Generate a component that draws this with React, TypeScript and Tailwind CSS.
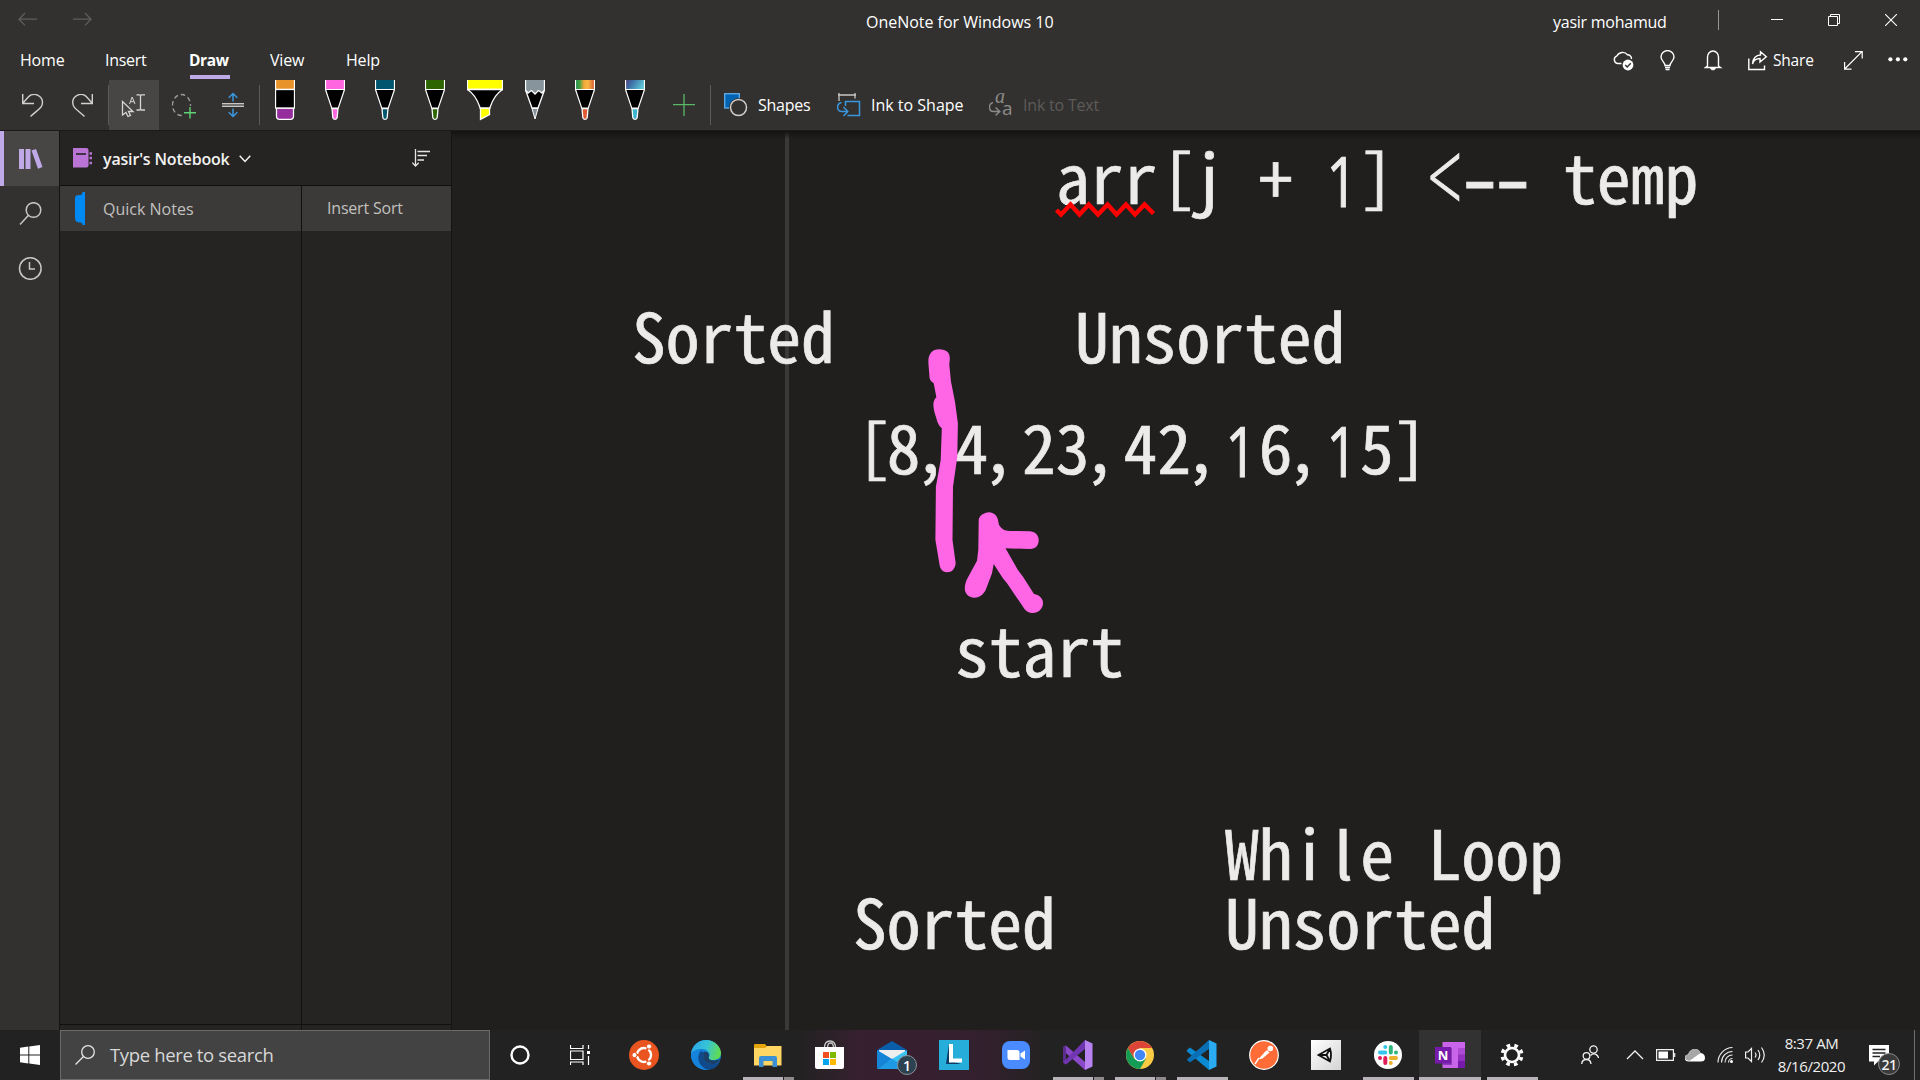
import React from "react";

type IconProps = { w: number; h: number; children: React.ReactNode; className?: string };

function Icon({ w, h, children, className = "" }: IconProps) {
  return (
    <svg
      width={w}
      height={h}
      viewBox={`0 0 ${w} ${h}`}
      fill="none"
      stroke="currentColor"
      strokeWidth={1.3}
      className={`block shrink-0 ${className}`}
    >
      {children}
    </svg>
  );
}

function TitleBar() {
  return (
    <div className="flex h-[40px] items-start">
      <Icon w={20} h={14} className="ml-[18px] mt-[12px] text-[#5f5e5c]">
        <path d="M19 7.2H1M7 1L1 7.2L7 13.4" />
      </Icon>
      <Icon w={20} h={14} className="ml-[35px] mt-[12px] text-[#5f5e5c]">
        <path d="M0 7.2H18M12 1L18 7.2L12 13.4" />
      </Icon>
      <div className="ml-[773px] mt-[11px] w-[190px] whitespace-nowrap text-[16px] leading-[22px] tracking-[-0.02px]">
        OneNote for Windows 10
      </div>
      <div className="ml-[497px] mt-[11px] w-[115px] whitespace-nowrap text-[16px] leading-[22px] tracking-[-0.25px]">
        yasir mohamud
      </div>
      <div className="ml-[50px] mt-[10px] h-[20px] w-px bg-[#979694]" />
      <Icon w={12} h={12} className="ml-[52px] mt-[14px]">
        <path d="M0 5.5H12" strokeWidth={1} />
      </Icon>
      <Icon w={12} h={12} className="ml-[45px] mt-[14px]">
        <path d="M.5 2.5H9.500V11.500H.5ZM2.500 2.500V.5H11.500V9.500H9.500" strokeWidth={1} />
      </Icon>
      <Icon w={12} h={12} className="ml-[45px] mt-[14px]">
        <path d="M0 0L12 12M12 0L0 12" strokeWidth={1.1} />
      </Icon>
    </div>
  );
}

function TabRow() {
  return (
    <div className="flex h-[40px] items-start text-[16px] leading-[22px]">
      <div className="ml-[20px] mt-[9px] w-[85px] tracking-[-0.2px]">Home</div>
      <div className="mt-[9px] w-[84px] tracking-[-0.3px]">Insert</div>
      <div className="mt-[9px] flex w-[81px] flex-col">
        <span className="text-[15.5px] font-bold tracking-[-0.4px]">Draw</span>
        <span className="ml-[1px] mt-[4px] h-[4px] w-[40px] bg-[#bfa9e6]" />
      </div>
      <div className="mt-[9px] w-[76px] tracking-[-0.2px]">View</div>
      <div className="mt-[9px] w-[60px] tracking-[-0.2px]">Help</div>
      <Icon w={22} h={20} className="ml-[1206px] mt-[11px]">
        <path d="M9.500 12.500H5.500A4 4 0 0 1 5 4.800A6 5.500 0 0 1 15.500 3.800A4 4 0 0 1 19.500 8" strokeWidth={1.4} />
        <circle cx="16" cy="14" r="5.400" fill="#fff" stroke="none" />
        <path d="M13.200 14L15.200 16L18.800 12.200" stroke="#323130" strokeWidth={1.400} />
      </Icon>
      <Icon w={16} h={21} className="ml-[26px] mt-[10px]">
        <path d="M5 15.500C5 12 1 11 1 6.800A6.500 6.200 0 0 1 14 6.800C14 11 10 12 10 15.500ZM5 17.500H10M5.500 19.500H9.500" strokeWidth={1.400} />
      </Icon>
      <Icon w={20} h={21} className="ml-[28px] mt-[10px]">
        <path d="M3.500 16V7A5.500 6 0 0 1 14.500 7V16L16.500 17.500H1.500Z" strokeWidth={1.400} />
        <path d="M6.500 18A2.500 2 0 0 0 11.500 18Z" fill="#fff" strokeWidth={0.600} />
      </Icon>
      <Icon w={20} h={21} className="ml-[24px] mt-[10px]">
        <path d="M.8 8.500V19.500H16.500V15.500M4.500 14C5.500 10 8.500 8.500 12 8.500V12L18.300 6.800L12.500 1.800V5C8 5 4.500 8.500 4.500 14Z" strokeWidth={1.400} />
      </Icon>
      <div className="ml-[5px] mt-[9px] w-[43px] text-[15.5px] tracking-[-0.2px]">Share</div>
      <Icon w={19} h={19} className="ml-[28px] mt-[11px]">
        <path d="M.7 18L18 .7M11 .6H18.200V7.500M.6 11V18.200H7.500" strokeWidth={1.200} />
      </Icon>
      <Icon w={20} h={6} className="ml-[25px] mt-[16px]">
        <g fill="#fff" stroke="none">
          <circle cx="2.400" cy="3.300" r="2.100" />
          <circle cx="9.900" cy="3.300" r="2.100" />
          <circle cx="17.300" cy="3.300" r="2.100" />
        </g>
      </Icon>
    </div>
  );
}

function Pen({ cap, tip = cap }: { cap: string; tip?: string }) {
  return (
    <div className="flex h-[50px] w-[50px] justify-center">
      <Icon w={20} h={41}>
        <rect x="0" y="-1" width="20" height="10" fill={cap} stroke="none" />
        <path d="M.5 0V10M19.500 10V0" stroke="#fff" strokeWidth={1.200} />
        <path d="M7 28.500H13L12.200 37.500Q12 39.300 10 39.300Q8 39.300 7.800 37.500Z" fill={tip} stroke="#fff" strokeWidth={1.300} />
        <path d="M.5 9.500H19.500L13.300 28H6.700Z" fill="#000" stroke="#fff" strokeWidth={1.200} />
      </Icon>
    </div>
  );
}

function Divider() {
  return <div className="mt-[5px] h-[40px] w-px bg-[#5b5a58]" />;
}

function Toolbar() {
  return (
    <div className="flex h-[50px] items-start">
      <Icon w={22} h={24} className="ml-[22px] mt-[14px] text-[#d2d0ce]">
        <path d="M.7 0V9.500H12M1 9L6.500 2.800C12 -2.500 20.500 2 20.500 8.500C20.500 14 16 15.500 8.500 22.500" strokeWidth={1.400} />
      </Icon>
      <Icon w={22} h={24} className="ml-[28px] mt-[14px] text-[#d2d0ce]">
        <path d="M20.300 0V9.500H9M20 9L14.500 2.800C9 -2.500 .7 2 .7 8.500C.7 14 5 15.500 12.500 22.500" strokeWidth={1.400} />
      </Icon>
      <div className="ml-[14px]">
        <Divider />
      </div>
      <div className="h-[50px] w-[50px] bg-[#484644] pl-[12px] pt-[14px] text-[#d8d6d4]">
        <Icon w={26} h={24}>
          <path d="M1.500 7.500V21L5 18.500L7 22.500L9.500 21.500L7.500 17.500H12Z" strokeWidth={1.300} />
          <path d="M16 .8H19Q20 .8 20 2V15Q20 16 19 16H16M24.500 .8H21Q20 .8 20 2V15Q20 16 21 16H24.500" strokeWidth={1.300} transform="translate(-.5 0)" />
          <path d="M8.500 10L11.200 3L14 10M9.500 7.700H13" strokeWidth={1} />
        </Icon>
      </div>
      <Icon w={26} h={26} className="ml-[12px] mt-[13px]">
        <ellipse cx="10.500" cy="12" rx="9" ry="10.500" stroke="#a19f9d" strokeDasharray="4.500 3" strokeWidth={1.300} />
        <rect x="12" y="13" width="14" height="13" fill="#323130" stroke="none" />
        <path d="M19 14V25.500M13 19.700H25" stroke="#5fd175" strokeWidth={1.400} />
      </Icon>
      <Icon w={22} h={26} className="ml-[25px] mt-[12px]">
        <path d="M0 11.500H22M0 14.500H22" stroke="#c8c6c4" strokeWidth={1.200} />
        <path d="M0 13H22" stroke="#8a8886" strokeWidth={1.500} />
        <path d="M11 9.500V1.500M6.700 5.700L11 1.500L15.300 5.700M11 16.500V24.500M6.700 20.300L11 24.500L15.300 20.300" stroke="#3a96dd" strokeWidth={1.500} />
      </Icon>
      <div className="ml-[15px]">
        <Divider />
      </div>
      <div className="flex h-[50px] w-[50px] justify-center">
        <Icon w={20} h={41}>
          <rect x=".5" y="-1" width="19" height="10.500" fill="#e8922a" stroke="#fff" />
          <path d="M1.500 28H18.500V36Q18.500 39.300 15.500 39.300H4.500Q1.500 39.300 1.500 36Z" fill="#962d9c" stroke="#fff" />
          <rect x=".5" y="9.500" width="19" height="18.500" fill="#000" stroke="#fff" />
        </Icon>
      </div>
      <Pen cap="#ff66e0" />
      <Pen cap="#00556f" />
      <Pen cap="#2d6600" />
      <div className="flex h-[50px] w-[50px] justify-center">
        <Icon w={36} h={41}>
          <path d="M.5 -1H35.500V9.500H.5Z" fill="#ffff00" stroke="#fff" />
          <path d="M13.500 28H22.500V34.500L13.500 39.300Z" fill="#ffff00" stroke="#fff" />
          <path d="M.5 9.500H35.500Q27 15 23 27.500V28H13V27.500Q9 15 .5 9.500Z" fill="#000" stroke="#fff" />
        </Icon>
      </div>
      <div className="flex h-[50px] w-[50px] justify-center">
        <Icon w={20} h={41}>
          <path d="M.5 0V10L7 28H13L19.500 10V0Z" fill="#000" stroke="#fff" />
          <path d="M.5 -1H19.500V10L17 13L13.500 10.500L10 14L6.500 10.500L3 13L.5 10Z" fill="#87949c" stroke="#fff" />
          <path d="M7 28.500H13L10 39Z" fill="#87949c" stroke="#fff" strokeWidth={1} />
        </Icon>
      </div>
      <svg width="0" height="0" className="absolute">
        <defs>
          <linearGradient id="rainbow" x1="0" x2="1">
            <stop offset="0" stopColor="#138a57" />
            <stop offset=".25" stopColor="#4fa23f" />
            <stop offset=".45" stopColor="#f2a93a" />
            <stop offset=".65" stopColor="#f7b846" />
            <stop offset="1" stopColor="#d4502f" />
          </linearGradient>
          <linearGradient id="galaxy" x1="0" x2="1" y2=".3">
            <stop offset="0" stopColor="#5b3a78" />
            <stop offset=".4" stopColor="#3e6ea5" />
            <stop offset="1" stopColor="#5cc3d4" />
          </linearGradient>
        </defs>
      </svg>
      <Pen cap="url(#rainbow)" tip="#df5a33" />
      <Pen cap="url(#galaxy)" tip="#3fb4cf" />
      <Icon w={22} h={22} className="ml-[13px] mt-[14px] text-[#59b868]">
        <path d="M11 0V22M0 10.700H22" strokeWidth={1.300} />
      </Icon>
      <div className="ml-[15px]">
        <Divider />
      </div>
      <Icon w={24} h={24} className="ml-[13px] mt-[13px]">
        <rect x=".7" y=".7" width="14.600" height="14.300" fill="#0063b1" stroke="#5aa7e4" strokeWidth={1.400} />
        <circle cx="14.500" cy="14.500" r="9.500" fill="#323130" stroke="none" />
        <circle cx="14.500" cy="14.500" r="8" stroke="#d2d0ce" strokeWidth={1.500} />
      </Icon>
      <div className="ml-[10px] mt-[14px] w-[54px] text-[16px] leading-[22px] tracking-[-0.25px]">Shapes</div>
      <Icon w={24} h={24} className="ml-[25px] mt-[13px]">
        <path d="M1 2H19M2 0V8M18 0V5.500" stroke="#c8c6c4" strokeWidth={1.300} />
        <path d="M8.500 13V8.500H22.500V22.500H10.500" stroke="#3a96dd" strokeWidth={1.500} />
        <path d="M4.500 9.500C-1 11 -.5 18.500 5 18.500H10.500M6.500 14L10.800 18.500L6.500 23" stroke="#3a96dd" strokeWidth={1.500} />
      </Icon>
      <div className="ml-[10px] mt-[14px] w-[94px] whitespace-nowrap text-[16px] leading-[22px]">Ink to Shape</div>
      <div className="relative ml-[24px] mt-[13px] h-[24px] w-[24px] text-[#8d8b89]">
        <Icon w={24} h={24}>
          <path d="M4 9.500C-1 11 -.5 18.500 4.500 18.500H10.500M6.500 14.500L10.800 18.500L6.500 22.500" strokeWidth={1.400} />
        </Icon>
        <span className="absolute left-[6px] top-[-9px] font-[Liberation_Serif] text-[20px] italic leading-[24px]">a</span>
        <span className="absolute left-[13px] top-[2px] text-[19px] leading-[26px]">a</span>
      </div>
      <div className="ml-[10px] mt-[14px] whitespace-nowrap text-[16px] leading-[22px] tracking-[-0.2px] text-[#5d5b59]">Ink to Text</div>
    </div>
  );
}

function Rail() {
  return (
    <div className="flex w-[59px] shrink-0 flex-col bg-[#323130] text-[#c8c6c4]">
      <div className="flex h-[55px] border-l-4 border-[#bfa9e6] bg-[#484644]">
        <Icon w={26} h={22} className="ml-[14px] mt-[17px]">
          <g fill="#bfa9e6" stroke="none">
            <rect x="1" y="1" width="5" height="20" />
            <rect x="7.500" y="1" width="5" height="20" />
            <path d="M13.500 2.500L18 1L24.500 19L20 20.700Z" />
          </g>
        </Icon>
      </div>
      <Icon w={24} h={24} className="ml-[19px] mt-[16px]">
        <circle cx="14.500" cy="8" r="7.300" strokeWidth={1.500} />
        <path d="M9.300 13.500L1 22.500" strokeWidth={1.500} />
      </Icon>
      <Icon w={24} h={24} className="ml-[18px] mt-[30px]">
        <circle cx="12.300" cy="12.500" r="10.800" strokeWidth={1.500} />
        <path d="M11.500 6V13H17" strokeWidth={1.500} />
      </Icon>
    </div>
  );
}

function SidePanel() {
  return (
    <div className="flex w-[393px] shrink-0 flex-col border-l border-r border-[#151413] bg-[#252423]">
      <div className="flex h-[55px] items-start border-b border-[#11100f]">
        <Icon w={20} h={20} className="ml-[13px] mt-[17px]">
          <path d="M0 0H13.500Q15.500 0 15.500 2V17.500Q15.500 19.500 13.500 19.500H0Z" fill="#b974d6" stroke="none" />
          <path d="M3 6H13" stroke="#252423" strokeWidth={1.600} />
          <path d="M16.500 5.500H19M16.500 10H19M16.500 15H19" stroke="#b974d6" strokeWidth={2.500} />
        </Icon>
        <div className="ml-[10px] mt-[17px] w-[128px] whitespace-nowrap text-[16px] font-semibold leading-[22px] tracking-[-0.17px] text-[#f3f2f1]">
          yasir's Notebook
        </div>
        <Icon w={12} h={8} className="ml-[8px] mt-[24px] text-[#f3f2f1]">
          <path d="M.7 .8L6 6.500L11.300 .8" strokeWidth={1.500} />
        </Icon>
        <Icon w={18} h={18} className="ml-[161px] mt-[18px] text-[#e6e4e2]">
          <path d="M3.500 0V17M.3 13.700L3.500 17L6.700 13.700M5.500 2.500H18M5.500 6.500H15M5.500 11H12" strokeWidth={1.300} />
        </Icon>
      </div>
      <div className="flex grow flex-row">
        <div className="flex w-[242px] flex-col border-r border-[#11100f]">
          <div className="flex h-[45px] items-start bg-[#3b3a39]">
            <Icon w={10} h={34} className="ml-[15px] mt-[6px]">
              <path d="M10 0V33H7.500Q7.500 30.500 5 30.500H4Q0 30 0 26V6Q0 3 4 3H5Q7.500 3 7.500 0Z" fill="#0089f2" stroke="none" />
            </Icon>
            <div className="ml-[18px] mt-[12px] text-[16px] leading-[22px] text-[#c2c0be]">Quick Notes</div>
          </div>
          <div className="mb-[5px] grow border-b border-[#11100f]" />
        </div>
        <div className="flex grow flex-col">
          <div className="h-[45px] bg-[#3b3a39] pl-[25px] pt-[11px] text-[16px] leading-[22px] tracking-[-0.2px] text-[#c2c0be]">Insert Sort</div>
          <div className="mb-[5px] grow border-b border-[#11100f]" />
        </div>
      </div>
    </div>
  );
}

const notes = [
  { text: "arr[j + 1] <-- temp", x: 1056, baseline: 204 },
  { text: "Sorted", x: 632, baseline: 363 },
  { text: "Unsorted", x: 1075, baseline: 363 },
  { text: "[8,4,23,42,16,15]", x: 853, baseline: 474 },
  { text: "start", x: 955, baseline: 677 },
  { text: "While Loop", x: 1225, baseline: 880 },
  { text: "Sorted", x: 853, baseline: 948.5 },
  { text: "Unsorted", x: 1225, baseline: 948.5 },
];

const canvasX = 452;
const canvasY = 131;

// Glyphs drawn without slabs, or nudged inside their half-width cell.
const cellGlyphs: Record<string, string> = {
  i: "font-['Noto_Sans_CJK_JP']",
  l: "font-['Noto_Sans_CJK_JP'] origin-[50%_96%] scale-y-95",
  "1": "font-['Open_Sans'] scale-x-80 -translate-x-[1px] translate-y-[5px] scale-y-104 [-webkit-text-stroke:1px_#ecebe9]",
  "[": "translate-x-[4px] -translate-y-[2px] scale-y-92",
  "]": "-translate-y-[2px] scale-y-92",
  ",": "-translate-x-[7px] -translate-y-[1px]",
  "-": "scale-x-135 scale-y-120 -translate-y-[2px] translate-x-[1px]",
  "<": "font-['Open_Sans'] font-light scale-x-90 scale-y-150",
};

function NoteText({ text }: { text: string }) {
  return (
    <>
      {text.split(/([il1[\],<-])/).map((part, i) =>
        cellGlyphs[part] ? (
          <span key={i} className={`inline-flex h-[64px] w-[33.8px] justify-center align-top ${cellGlyphs[part]}`}>
            {part}
          </span>
        ) : (
          part
        )
      )}
    </>
  );
}

function Canvas() {
  return (
    <div className="relative grow bg-[#201f1d]">
      <div className="absolute bottom-0 left-[333px] top-0 w-[4px] bg-[#3a3938]" />
      {notes.map((n, i) => (
        <div
          key={i}
          className="absolute h-[64px] whitespace-pre font-['Noto_Sans_Mono_CJK_JP','Liberation_Mono',monospace] text-[67.6px] leading-[64px] text-[#ecebe9] [-webkit-text-stroke:0.7px_#ecebe9]"
          style={{ left: n.x - canvasX, top: Math.round(n.baseline - canvasY - 61) }}
        >
          <NoteText text={n.text} />
        </div>
      ))}
      <svg className="absolute left-0 top-0" width="1468" height="899" viewBox="452 131 1468 899">
        <path
          d="M1056.500 210L1061 214.500L1070.500 204.500L1079.500 214.500L1088.700 204.500L1098 214.500L1107.600 204.500L1116.500 214.500L1126 204.500L1135 214.500L1144.500 204.500L1153.500 213.500"
          fill="none"
          stroke="#ff0000"
          strokeWidth={4.400}
        />
        <g fill="#ff66e5">
          <path d="M928.400 363C928 354 932 349.300 939 349.300C947 349.300 950 353 949.800 359L949.300 365L951 381.700L955 401.700L957.900 423.300L957.300 456.700L953 486.700L952.500 540L955.700 563.300C955 569 952 572.300 947 572.300C942 572 940 568 939.600 565L935.400 540L935.900 486.700L940.700 460L941.800 428.300C938 425 937 421 936.400 418.300C934 411 931 402 936.400 397.300L933.700 383.300C930 381 929.500 378 929.500 377.300Z" />
          <path d="M978.700 520C979 516 984 512.300 989 512.300C994 512.300 997 516 998 520L999 525C1001 528 1004 531 1009.800 531L1030.200 531.300C1036 532 1038.700 536 1038.700 540C1038.700 545 1036 549 1030 549L1005.500 548.300L1017.900 570L1023 576.700L1034 594C1040 595 1043 599 1043 603C1043 609 1038 613 1032.900 613C1028 613 1025 610 1023 606.700L1007 583.300L1002.900 578.300L993.700 564L992 573.300L985.700 590C983 595 979 597.700 974.500 597.700C968 597.700 964.800 593 964.800 588.300C965 584 966 581 967.500 578.300L977 560.700L978.300 550Z" />
        </g>
      </svg>
      <div className="absolute left-0 right-0 top-0 h-[8px] bg-gradient-to-b from-[#141312] to-transparent" />
    </div>
  );
}

function AppCell({ children, bars = "none", active = false, glow = "" }: { children: React.ReactNode; bars?: "none" | "one" | "two"; active?: boolean; glow?: string }) {
  return (
    <div className={`flex h-[50px] w-[62px] flex-col items-center ${active ? "bg-[#323232]" : glow}`}>
      <div className="flex h-[47px] items-center justify-center pt-[3px]">{children}</div>
      {bars === "one" && <div className={active ? "h-[3px] w-[62px] bg-[#b8b3b8]" : "h-[3px] w-[51px] bg-[#b8b3b8]"} />}
      {bars === "two" && (
        <div className="flex h-[3px] w-[51px] gap-px">
          <div className="w-[40px] bg-[#b8b3b8]" />
          <div className="w-[10px] bg-[#8d898d]" />
        </div>
      )}
    </div>
  );
}

function Taskbar() {
  return (
    <div className="flex h-[50px] bg-[#222222]">
      <div className="flex w-[60px] items-center justify-center">
        <Icon w={20} h={20}>
          <path d="M0 2.700L8.300 1.500V9.500H0ZM9.300 1.400L20 0V9.500H9.300ZM0 10.500H8.300V18.500L0 17.300ZM9.300 10.500H20V20L9.300 18.600Z" fill="#fff" stroke="none" />
        </Icon>
      </div>
      <div className="flex w-[430px] items-center border border-[#6a6a6a] bg-[#434343] pl-[14px]">
        <Icon w={20} h={20} className="text-[#e6e6e6]">
          <circle cx="13" cy="7" r="6.300" />
          <path d="M8.500 11.500L.5 19.500" />
        </Icon>
        <div className="ml-[15px] whitespace-nowrap text-[18.500px] leading-[26px] tracking-[-0.36px] text-[#d8d8d8]">Type here to search</div>
      </div>
      <div className="flex w-[60px] items-center justify-center">
        <Icon w={22} h={22}>
          <circle cx="11" cy="11" r="8.500" stroke="#fff" strokeWidth={2.400} />
        </Icon>
      </div>
      <div className="flex w-[63px] items-center pl-[20px]">
        <Icon w={20} h={20}>
          <path d="M.5 0V3.500H13V0M.5 6H13V14.500H.5ZM.5 20V17H13V20M18.500 0V4M18.500 11V20" strokeWidth={1.200} />
          <rect x="17" y="6" width="3" height="3" fill="#fff" stroke="none" />
        </Icon>
      </div>

      <AppCell>
        <Icon w={30} h={30}>
          <circle cx="15" cy="15" r="15" fill="#e95420" stroke="none" />
          <circle cx="15" cy="15" r="7" stroke="#fff" strokeWidth={2.500} />
          <path d="M15 15L4 15M15 15L21 4.500M15 15L21 25.500" stroke="#e95420" strokeWidth={2} />
          <circle cx="15" cy="15" r="5.500" fill="#e95420" stroke="none" />
          <g fill="#fff" stroke="#e95420" strokeWidth={1}>
            <circle cx="5.500" cy="15" r="2.600" />
            <circle cx="20" cy="6.500" r="2.600" />
            <circle cx="20" cy="23.500" r="2.600" />
          </g>
        </Icon>
      </AppCell>
      <AppCell>
        <Icon w={30} h={30}>
          <defs>
            <linearGradient id="edgeTop" x1="0" x2="1" y1=".3" y2=".5">
              <stop offset="0" stopColor="#2ba5e8" />
              <stop offset=".5" stopColor="#36c3d8" />
              <stop offset="1" stopColor="#63dd4b" />
            </linearGradient>
          </defs>
          <g stroke="none">
            <circle cx="15" cy="15" r="15" fill="#1280d8" />
            <path d="M0 14C1 5 8 0 15 0C24 0 30 7 30 13C30 18 26 20 22 20C19 20 17 19 18 17C20 14 17 9 11 9C6 9 2 11 0 14Z" fill="url(#edgeTop)" />
            <path d="M10 11C4 17 9 29 18 29.700C24 29 27 26 28.500 22C20 27 10 22 13 12.500Z" fill="#114a8b" />
            <path d="M13 12C10 19 16 25 23 24C25 23.700 27.500 22.500 28.500 21C30 20 29 19 28 19.500C24 21 17.500 21 17.500 17.500C19 15 17 11 13 12Z" fill="#1b3f66" />
            <path d="M9 10C3 18 8 28 17 30C6 30 0 23 0 14C2 11 6 9 9 10Z" fill="#1583dc" />
          </g>
        </Icon>
      </AppCell>
      <AppCell bars="two">
        <Icon w={28} h={24}>
          <g stroke="none">
            <path d="M0 2Q0 1 1 1H11L13 3.500V8H0Z" fill="#e5a50a" />
            <path d="M0 5H11L13 3H27.500V22.500H0Z" fill="#ffd563" />
            <path d="M5 24V15Q5 13 7 13H21Q23 13 23 15V24H18.500V18H9.500V24Z" fill="#3b8fd4" />
          </g>
        </Icon>
      </AppCell>
      <AppCell glow="bg-gradient-to-r from-[#222222] to-[#36202f]">
        <Icon w={30} h={30}>
          <path d="M9.500 8Q9.500 1 15 1Q20.500 1 20.500 8M12.500 8Q12.500 3 15.500 3Q18.500 3 18.500 8" stroke="#c8c8c8" />
          <g stroke="none">
            <path d="M0 7H29V27Q29 29 27 29H2Q0 29 0 27Z" fill="#fff" />
            <rect x="8" y="12" width="6" height="6" fill="#f25022" />
            <rect x="15" y="12" width="6" height="6" fill="#7fba00" />
            <rect x="8" y="19" width="6" height="6" fill="#00a4ef" />
            <rect x="15" y="19" width="6" height="6" fill="#ffb900" />
          </g>
        </Icon>
      </AppCell>
      <AppCell glow="bg-[#36202f]">
        <div className="relative h-[30px] w-[30px]">
          <Icon w={30} h={30}>
            <g stroke="none">
              <path d="M0 10L15 1L30 10V13H0Z" fill="#0a5da8" />
              <path d="M2 10H28V16L15 24L2 16Z" fill="#eeeeee" />
              <path d="M0 10L15 19L0 29Z" fill="#1583d6" />
              <path d="M30 10L15 19L30 29Z" fill="#39c2f4" />
              <path d="M0 29L15 18.500L30 29Z" fill="#1e9ae4" />
            </g>
          </Icon>
          <div className="absolute left-[20px] top-[15px] flex h-[20px] w-[20px] items-center justify-center rounded-full border border-[#8b9298] bg-[#2d4250] text-[14px] font-semibold">1</div>
        </div>
      </AppCell>
      <AppCell glow="bg-gradient-to-r from-[#36202f] to-[#33202d]">
        <div className="h-[30px] w-[30px] bg-[#27add9]">
          <Icon w={30} h={30}>
            <path d="M10 4L7 24H22L12 21Z" fill="#0d3b66" stroke="none" />
            <path d="M12 4V20.500H23" stroke="#fff" strokeWidth={4} />
          </Icon>
        </div>
      </AppCell>
      <AppCell glow="bg-gradient-to-r from-[#33202d] to-[#222222]">
        <Icon w={28} h={28}>
          <rect width="28" height="28" rx="8" fill="#4a8cff" stroke="none" />
          <path d="M5.500 9H15Q17.500 9 17.500 11.500V19H8Q5.500 19 5.500 16.500ZM18.500 12.500L23 9.500V18.500L18.500 15.500Z" fill="#fff" stroke="none" />
        </Icon>
      </AppCell>
      <AppCell bars="two">
        <Icon w={30} h={30}>
          <g stroke="none">
            <path d="M0 7L3 5.500L22 22V30L0 10.500Z" fill="#8a49c9" />
            <path d="M0 7L3 5.500V24.500L0 22.500Z" fill="#5c2d91" />
            <path d="M0 22.500L22 0V9L3 24.500Z" fill="#7035b0" />
            <path d="M22 0L29.500 3.500V26.500L22 30Z" fill="#b883f0" />
          </g>
        </Icon>
      </AppCell>
      <AppCell bars="two">
        <Icon w={28} h={28}>
          <g stroke="none">
            <circle cx="14" cy="14" r="14" fill="#fbcb43" />
            <path d="M1.900 7A14 14 0 0 1 26.100 7H14L8 17.500Z" fill="#db4437" />
            <path d="M1.900 7A14 14 0 0 0 14 28L20 17.500H14L8 17.500Z" fill="#149b56" />
            <circle cx="14" cy="14" r="6.500" fill="#fff" />
            <circle cx="14" cy="14" r="5.200" fill="#4285f4" />
          </g>
        </Icon>
      </AppCell>
      <AppCell bars="one">
        <Icon w={30} h={30}>
          <g stroke="none">
            <path d="M0 10L3 7.500L22 21V30L0 11.500Z" fill="#0a8ad2" />
            <path d="M0 19.500L22 0V9L3 22.500L0 20Z" fill="#0a6fb5" />
            <path d="M22 0L29.500 3.500V26.500L22 30Z" fill="#2aaaf0" />
          </g>
        </Icon>
      </AppCell>
      <AppCell>
        <Icon w={30} h={30}>
          <circle cx="15" cy="15" r="14.300" fill="#ff6c37" stroke="#fff" strokeWidth={1.200} />
          <path d="M6 24L10 18M10.500 19L17.500 11.500" stroke="#fff" strokeWidth={1.400} />
          <path d="M10 19L18 10L20.500 12.500L13.500 18.500Z" fill="#fff" stroke="none" />
          <circle cx="21.300" cy="8.500" r="2.800" fill="#fff" stroke="none" />
        </Icon>
      </AppCell>
      <AppCell>
        <div className="h-[30px] w-[30px] bg-gradient-to-br from-white to-[#d4d4d4]">
          <Icon w={30} h={30}>
            <path d="M7.500 15L19 8.500Q21 15 19 21.500ZM7.500 15H15.500M15.500 15L19 8.500M15.500 15L19 21.500" stroke="#111" strokeWidth={1.800} />
          </Icon>
        </div>
      </AppCell>
      <AppCell bars="one">
        <Icon w={28} h={28}>
          <circle cx="14" cy="14" r="14" fill="#fff" stroke="none" />
          <g strokeWidth={4} strokeLinecap="round">
            <path d="M11.300 6V6.100M6 11.500H11.300" stroke="#36c5f0" />
            <path d="M16.800 6V11.500M22 11.500V11.600" stroke="#2eb67d" />
            <path d="M16.800 22V22.100M16.800 17H22" stroke="#ecb22e" />
            <path d="M11.300 17V22M6 17V17.100" stroke="#e01e5a" />
          </g>
        </Icon>
      </AppCell>
      <AppCell bars="one" active>
        <div className="relative h-[28px] w-[30px]">
          <Icon w={30} h={28}>
            <g stroke="none">
              <rect x="7.500" y="1" width="22.500" height="26" fill="#ca64ea" />
              <rect x="23" y="7" width="7" height="7" fill="#ae4bd5" />
              <rect x="23" y="13.500" width="7" height="7" fill="#9332bf" />
              <rect x="23" y="20" width="7" height="7" fill="#7719aa" />
              <rect x="8" y="7" width="9" height="17" fill="#8f3fb3" />
              <rect x="0" y="6" width="16" height="16.500" fill="#7719aa" />
            </g>
          </Icon>
          <span className="absolute left-0 top-[6px] w-[16px] text-center text-[13px] font-bold leading-[17px]">N</span>
        </div>
      </AppCell>
      <AppCell bars="one">
        <Icon w={24} h={24}>
          <circle cx="12" cy="12" r="7" stroke="#fff" strokeWidth={2.600} />
          <circle cx="12" cy="12" r="9.700" stroke="#fff" strokeWidth={3.600} strokeDasharray="3.600 4.018" transform="rotate(12 12 12)" />
        </Icon>
      </AppCell>

      <div className="flex grow items-center text-[#f0f0f0]">
        <Icon w={18} h={20} className="ml-[38px]">
          <circle cx="12.500" cy="4.500" r="3.700" />
          <circle cx="5.500" cy="11" r="3.300" />
          <path d="M.7 19Q1 14.500 5.500 14.500Q9.500 14.500 10 19M9.500 10.500Q12 8 14.500 9.200Q17.300 10.500 17.500 13" />
        </Icon>
        <Icon w={18} h={10} className="ml-[27px]">
          <path d="M1 9L9 1L17 9" />
        </Icon>
        <Icon w={20} h={12} className="ml-[12px]">
          <path d="M.6 .6H17.400V11.400H.6ZM18.700 4V8" strokeWidth={1.200} />
          <rect x="2.500" y="2.500" width="9.500" height="7" fill="#fff" stroke="none" />
        </Icon>
        <Icon w={20} h={13} className="ml-[9px]">
          <g stroke="none">
            <path d="M3.500 12.500A3.500 3.500 0 0 1 3 5.500Q5 0 10 0Q14 0 15.500 4Q20 4.500 20 9Q20 12.500 16 12.500Z" fill="#fff" />
            <path d="M0 9A3.500 3.500 0 0 1 3.500 5.500Q5 0 10 0Q14 0 15.500 4L5 11.500Q1.500 12.500 0 9Z" fill="#a6a6a6" />
          </g>
        </Icon>
        <Icon w={18} h={18} className="ml-[12px]">
          <path d="M1 16.500A15 15 0 0 1 15.500 1.500M4.500 16.500A11 11 0 0 1 15.500 5.500M8 16.500A7.500 7.500 0 0 1 15.500 9M11.500 16.500A4 4 0 0 1 15.500 12.500" strokeWidth={1.100} />
          <circle cx="14.500" cy="15.500" r="1.500" fill="#fff" stroke="none" />
        </Icon>
        <Icon w={22} h={18} className="ml-[10px]">
          <path d="M.6 6V12H3L6.500 15.500V2.500L3 6ZM10 6.500Q12 9 10 11.500M13 4Q16.500 9 13 14M16.500 1.500Q22 9 16.500 16.500" strokeWidth={1.200} />
        </Icon>
        <div className="ml-[7px] flex w-[75px] flex-col items-center whitespace-nowrap text-[15px] leading-[23px] tracking-[-0.4px]">
          <span>8:37 AM</span>
          <span>8/16/2020</span>
        </div>
        <div className="relative ml-[20px] h-[22px] w-[20px]">
          <Icon w={20} h={22}>
            <path d="M0 1H20V17.500H9L5 21.500V17.500H0Z" fill="#fff" stroke="none" />
            <path d="M3.500 5.500H16.500M3.500 9H16.500M3.500 12.500H11" stroke="#222" />
          </Icon>
          <div className="absolute left-[9px] top-[9px] flex h-[22px] w-[22px] items-center justify-center rounded-full border border-[#8a8a8a] bg-[#3a3a3a] text-[14px] font-semibold tracking-[-0.5px]">21</div>
        </div>
        <div className="ml-auto mr-[5px] h-[50px] w-px bg-[#6f6f6f]" />
      </div>
    </div>
  );
}

export default function App() {
  return (
    <div className="flex h-[1080px] w-[1920px] flex-col overflow-hidden bg-[#201f1d] font-['Open_Sans','Noto_Sans',sans-serif] text-white">
      <div className="h-[130px] shrink-0 bg-[#323130]">
        <TitleBar />
        <TabRow />
        <Toolbar />
      </div>
      <div className="flex h-[900px] shrink-0 border-t border-[#1b1a19]">
        <Rail />
        <SidePanel />
        <Canvas />
      </div>
      <Taskbar />
    </div>
  );
}
